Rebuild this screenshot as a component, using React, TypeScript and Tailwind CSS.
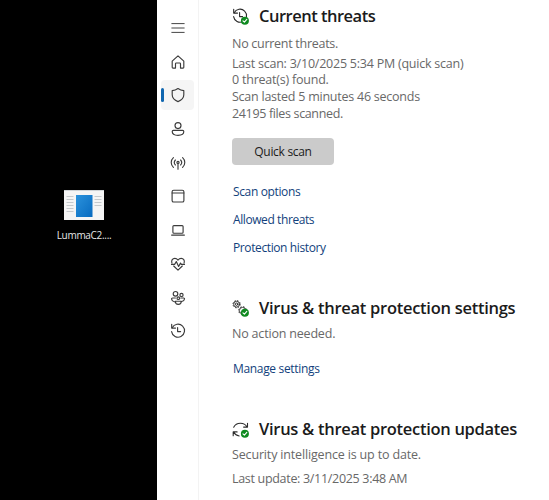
import type { ReactNode } from "react";

interface IconProps {
  children: ReactNode;
}

function NavIcon({ children }: IconProps) {
  return (
    <svg
      viewBox="0 0 16 16"
      className="w-4 h-4"
      fill="none"
      stroke="#3c3c3c"
      strokeWidth="1.15"
      strokeLinecap="round"
      strokeLinejoin="round"
    >
      {children}
    </svg>
  );
}

function HistoryShape() {
  return (
    <>
      <path d="M2.2 4.8A6.5 6.5 0 1 1 1.6 8.6" />
      <path d="M1.7 1.3v3.8h3.8M7.6 4.6v4h3" />
    </>
  );
}

// green status badge in the corner of the section icons
function CheckBadge() {
  return (
    <>
      <circle cx="12.9" cy="12.7" r="4" fill="#0f8a20" stroke="none" />
      <path d="m11 12.8 1.4 1.3 2.4-2.7" stroke="#fff" strokeWidth="1.1" />
    </>
  );
}

function SectionIcon({ children }: IconProps) {
  return (
    <svg
      viewBox="0 0 17 17"
      className="w-[17px] h-[17px]"
      fill="none"
      stroke="#2b2b2b"
      strokeWidth="1.1"
      strokeLinecap="round"
      strokeLinejoin="round"
    >
      {children}
      <CheckBadge />
    </svg>
  );
}

const navItems = [
  { name: "Menu", icon: <path d="M1.8 3.6h12.4M1.8 8h12.4M1.8 12.4h12.4" strokeWidth="0.95" /> },
  {
    name: "Home",
    icon: (
      <path d="M2.2 7.2 8 1.9l5.8 5.3v6.1a.8.8 0 0 1-.8.8h-2.5V9.8a.8.8 0 0 0-.8-.8H6.3a.8.8 0 0 0-.8.8v4.3H3a.8.8 0 0 1-.8-.8z" />
    ),
  },
  {
    name: "Virus & threat protection",
    active: true,
    icon: (
      <path d="M8 1.5c1.8 1.3 3.7 2 5.8 2.1v4.2c0 3.1-2 5.3-5.8 6.8-3.8-1.5-5.8-3.7-5.8-6.8V3.6C4.3 3.5 6.2 2.8 8 1.5z" />
    ),
  },
  {
    name: "Account protection",
    icon: (
      <>
        <circle cx="8" cy="4.6" r="3" />
        <path d="M3.4 9.4h9.2a1.2 1.2 0 0 1 1.2 1.2c0 2.3-2.5 3.8-5.8 3.8s-5.8-1.5-5.8-3.8a1.2 1.2 0 0 1 1.2-1.2z" />
      </>
    ),
  },
  {
    name: "Firewall & network protection",
    icon: (
      <>
        <path d="M8 8v6.2M3.4 12.4a6.6 6.6 0 0 1 0-9.8M12.6 12.4a6.6 6.6 0 0 0 0-9.8M5.4 10a3.7 3.7 0 0 1 0-5M10.6 10a3.7 3.7 0 0 0 0-5" />
        <circle cx="8" cy="7.4" r="1.1" />
      </>
    ),
  },
  {
    name: "App & browser control",
    icon: (
      <>
        <rect x="2.1" y="2.2" width="11.8" height="11.8" rx="1.6" />
        <path d="M2.2 5h11.6" />
      </>
    ),
  },
  {
    name: "Device security",
    icon: (
      <>
        <rect x="2.9" y="3.6" width="10.2" height="7.6" rx="1" />
        <path d="M1.6 13.1h12.8" />
      </>
    ),
  },
  {
    name: "Device performance & health",
    icon: (
      <>
        <path d="M1.9 7.2C1 4.2 2.7 2.4 4.8 2.4c1.5 0 2.5.8 3.2 1.7.7-.9 1.7-1.7 3.2-1.7 2.1 0 3.8 1.8 2.9 4.8M3.7 10 8 14.1l4.3-4.1" />
        <path d="M1.5 8.4h3.1l1.7-2.8 2.3 4.9 1.9-3.4.9 1.3h3.1" />
      </>
    ),
  },
  {
    name: "Family options",
    icon: (
      <>
        <circle cx="5.5" cy="3.8" r="2.3" />
        <circle cx="11.5" cy="4.9" r="1.6" />
        <circle cx="8.3" cy="8.2" r="1.3" />
        <path d="M5.4 8H2.6c-.7 0-1.1.5-1 1.2.2 1.4 1.2 2.3 2.7 2.6M10.8 8h2.9c.5 0 .9.5.8 1-.2 1.3-1.2 2.2-2.7 2.5M5.3 11.2h6c0 2-1.2 3.1-3 3.1s-3-1.1-3-3.1z" />
      </>
    ),
  },
  { name: "Protection history", icon: <HistoryShape /> },
];

function Desktop() {
  return (
    <div className="w-[157px] shrink-0 bg-black pt-[190px] pl-[53px]">
      <div className="w-[62px] flex flex-col items-center">
        <svg viewBox="0 0 40 30" className="w-10 h-[30px]">
          <rect width="40" height="30" fill="#f5f5f5" />
          <path d="M0 .5h40" stroke="#cfd3d6" />
          <path
            d="M2.5 6.5h7M2.5 9.5h7M2.5 12.5h7M2.5 15.5h7M2.5 18.5h7M2.5 21.5h7M30.5 6.5h7M30.5 9.5h7M30.5 12.5h7M30.5 15.5h7"
            stroke="#b9bec2"
            strokeWidth="0.8"
          />
          <defs>
            <linearGradient id="app" x1="0" y1="0" x2="1" y2="1">
              <stop stopColor="#2b92dc" />
              <stop offset="1" stopColor="#086bc0" />
            </linearGradient>
          </defs>
          <rect x="12" y="5" width="16.5" height="22" fill="url(#app)" />
        </svg>
        <span className="mt-[7px] text-[10px] leading-4 tracking-[-0.3px] text-[#e6e6e6] whitespace-nowrap">
          LummaC2....
        </span>
      </div>
    </div>
  );
}

function Sidebar() {
  return (
    <nav className="w-[42px] shrink-0 border-r border-[#f3f3f3] pt-[13px] pl-1">
      {navItems.map((item) => (
        <div key={item.name} className="h-[33.7px]">
          <button
            aria-label={item.name}
            className={
              item.active
                ? "relative w-[33px] h-[30px] flex items-center justify-center rounded bg-[#f5f5f5]"
                : "w-[33px] h-[30px] flex items-center justify-center"
            }
          >
            {item.active && (
              <span className="absolute left-0 top-2 w-[3px] h-[14px] rounded-full bg-[#1067b0]" />
            )}
            <NavIcon>{item.icon}</NavIcon>
          </button>
        </div>
      ))}
    </nav>
  );
}

interface HeadingProps {
  icon: ReactNode;
  children: ReactNode;
}

function Heading({ icon, children }: HeadingProps) {
  return (
    <div className="h-6 flex items-center gap-[10px]">
      <SectionIcon>{icon}</SectionIcon>
      <h2 className="text-[16.5px] leading-6 font-semibold text-[#1b1b1b]">{children}</h2>
    </div>
  );
}

export default function App() {
  return (
    <div className="w-[549px] h-[500px] flex overflow-hidden bg-white font-['Open_Sans','Noto_Sans',sans-serif]">
      <Desktop />
      <Sidebar />
      <main className="flex-1 pt-[4px] pl-[33px] whitespace-nowrap text-[12.5px] leading-[17px] text-[#686868]">
        <section className="h-[292px]">
          <Heading icon={<HistoryShape />}>
            <span className="tracking-[-0.5px]">Current threats</span>
          </Heading>
          <p className="mt-[7px] tracking-[-0.28px]">No current threats.</p>
          <div className="mt-[3px]">
            <p className="h-4 tracking-[-0.23px]">Last scan: 3/10/2025 5:34 PM (quick scan)</p>
            <p className="tracking-[-0.22px]">0 threat(s) found.</p>
            <p className="tracking-[-0.24px]">Scan lasted 5 minutes 46 seconds</p>
            <p className="tracking-[-0.35px]">24195 files scanned.</p>
          </div>
          <button className="mt-4 w-[102px] h-[27px] rounded bg-[#cbcbcb] text-[12px] tracking-[-0.3px] text-[#1b1b1b]">
            Quick scan
          </button>
          <div className="mt-[18px] flex flex-col items-start gap-[10.8px] pl-px text-[12px] text-[#123f7c]">
            <a className="tracking-[-0.36px]">Scan options</a>
            <a className="tracking-[-0.41px]">Allowed threats</a>
            <a className="tracking-[-0.39px]">Protection history</a>
          </div>
        </section>
        <section className="h-[121px]">
          <Heading
            icon={
              <>
                <circle cx="4.6" cy="4.2" r="1.2" strokeWidth="1" />
                <circle cx="4.6" cy="4.2" r="2.9" strokeWidth="0.9" />
                <circle cx="4.6" cy="4.2" r="3.6" strokeWidth="1" strokeLinecap="butt" strokeDasharray="1.5 1.33" />
                <circle cx="10.6" cy="10.6" r="3.2" strokeWidth="0.9" />
                <circle cx="10.6" cy="10.6" r="3.9" strokeWidth="1" strokeLinecap="butt" strokeDasharray="1.6 1.46" />
              </>
            }
          >
            <span className="tracking-[-0.28px]">Virus &amp; threat protection settings</span>
          </Heading>
          <p className="mt-[5px] tracking-[-0.19px]">No action needed.</p>
          <a className="mt-[18px] block pl-px text-[12px] tracking-[-0.33px] text-[#123f7c]">Manage settings</a>
        </section>
        <section>
          <Heading
            icon={
              <>
                <path d="M1.7 6.2C3 3.5 5.3 2.2 8.4 2.2c3 0 5.2 1.3 6.5 3.6M15.5 2.2v3.9h-3.9M7.2 15c-2.5-.4-4.3-1.7-5.4-3.8M1.2 14.8v-3.9h3.9" />
              </>
            }
          >
            <span className="tracking-[-0.29px]">Virus &amp; threat protection updates</span>
          </Heading>
          <p className="mt-[5px] tracking-[-0.16px]">Security intelligence is up to date.</p>
          <p className="mt-[7px] tracking-[-0.31px]">Last update: 3/11/2025 3:48 AM</p>
        </section>
      </main>
    </div>
  );
}
